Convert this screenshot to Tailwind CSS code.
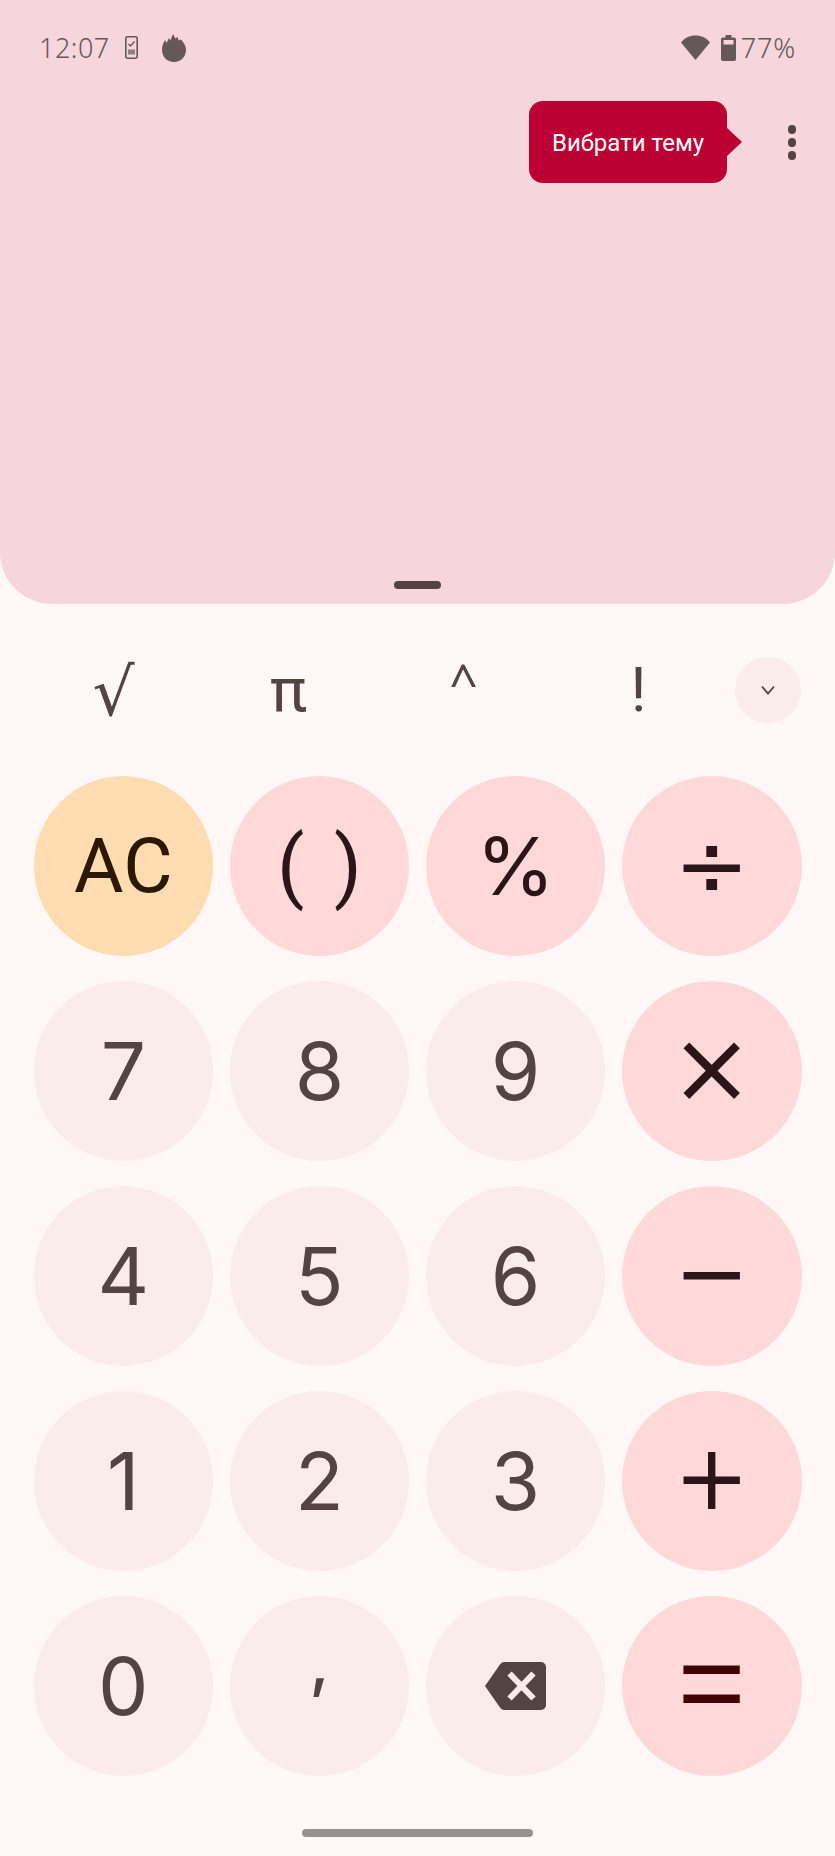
<!DOCTYPE html>
<html lang="uk">
  <head>
    <meta charset="UTF-8" />
    <meta name="viewport" content="width=device-width, initial-scale=1.0" />
    <title>Calculator</title>
    <script src="https://cdn.jsdelivr.net/npm/@tailwindcss/browser@4"></script>
  </head>
  <body class="bg-[#fff8f6] text-[#534341] font-['Inter',sans-serif] w-[835px] h-[1856px] overflow-hidden flex flex-col">

    <!-- display panel -->
    <header class="bg-[#f6d5dc] h-[604px] rounded-b-[52px] flex flex-col shrink-0">
      <div class="flex items-center justify-between pl-[39px] pr-[39px] pt-[31px] h-[64px] text-[#655858]">
        <div class="flex items-center">
          <span class="text-[27px] font-[350] tracking-[0.5px] font-['Noto_Sans',sans-serif] leading-none">12:07</span>
          <svg class="ml-[15px] w-[13px] h-[23px]" viewBox="0 0 13 23">
            <rect x="0.8" y="0.8" width="11.4" height="21.4" rx="1.6" fill="none" stroke="currentColor" stroke-width="1.6" />
            <path d="M3.5 8l2 2 4-4.500" fill="none" stroke="currentColor" stroke-width="1.4" />
            <rect x="3" y="13.500" width="7" height="5" fill="currentColor" opacity="0.7" />
          </svg>
          <svg class="ml-[24px] w-[24px] h-[28px]" viewBox="0 0 26 28" preserveAspectRatio="none">
            <path d="M13 28C5.500 28 0 23 0 15.500 0 11.500 1.500 8.500 3.500 6l1.500 3L7.500 4l1.500 2.500L12 0l2.500 4.500L17 3l1 3.500 2.500-1C23.500 8.500 26 11.500 26 15.500 26 23 20.500 28 13 28z" fill="currentColor" />
          </svg>
        </div>
        <div class="flex items-center">
          <svg class="w-[29px] h-[25px]" viewBox="0 0 29 25">
            <path d="M14.500 25L0 7.500C3.500 3 8.500 0.500 14.500 0.500S25.500 3 29 7.500z" fill="currentColor" />
          </svg>
          <svg class="ml-[11px] w-[15px] h-[26px]" viewBox="0 0 15 26">
            <path fill-rule="evenodd" d="M4.500 0h6v2.500h2.500a2 2 0 0 1 2 2V24a2 2 0 0 1-2 2H2a2 2 0 0 1-2-2V4.500a2 2 0 0 1 2-2h2.500zM2.500 5v4.500h10V5z" fill="currentColor" />
          </svg>
          <span class="ml-[5px] text-[27px] font-[350] tracking-[0.8px] font-['Noto_Sans',sans-serif] leading-none">77%</span>
        </div>
      </div>

      <div class="flex items-center justify-end pt-[37px]">
        <div class="relative bg-[#bd0033] text-white rounded-[14px] w-[198px] h-[82px] pt-[2px] flex items-center justify-center text-[24px] font-['Roboto',sans-serif]">
          Вибрати тему
          <span class="absolute left-[197px] top-[26px] w-[16px] h-[30px] bg-[#bd0033] [clip-path:polygon(0_0,100%_50%,0_100%)]"></span>
        </div>
        <div class="ml-[61px] mr-[39px] flex flex-col gap-[4px]">
          <span class="w-[8px] h-[9px] rounded-full bg-[#534341]"></span>
          <span class="w-[8px] h-[9px] rounded-full bg-[#534341]"></span>
          <span class="w-[8px] h-[9px] rounded-full bg-[#534341]"></span>
        </div>
      </div>

      <div class="mt-auto mb-[15px] mx-auto w-[47px] h-[8px] rounded-full bg-[#534341]"></div>
    </header>

    <!-- scientific row -->
    <section class="flex items-center pl-[26px] pt-[53px] h-[119px] shrink-0 text-[62px] leading-none font-['Roboto',sans-serif]">
      <div class="w-[700px] grid grid-cols-4 items-center text-center">
        <span class="font-['DejaVu_Sans',sans-serif] text-[66px] font-normal pt-[5px]">√</span>
        <span>π</span>
        <span class="font-['Noto_Sans',sans-serif] text-[50px] pb-[18px]">^</span>
        <span>!</span>
      </div>
      <button class="ml-[9px] w-[66px] h-[66px] rounded-full bg-[#fbecec] flex items-center justify-center">
        <svg class="w-[16px] h-[12px]" viewBox="0 0 16 12"><path d="M2 2.500l6 7 6-7" fill="none" stroke="#534341" stroke-width="1.800" /></svg>
      </button>
    </section>

    <!-- keypad -->
    <main class="grid grid-cols-4 gap-x-[16.500px] gap-y-[25px] px-[33.500px] pt-[53px] text-[80px] font-normal leading-none">
      <button class="h-[180px] rounded-full bg-[#ffdcb1] text-[#2a1800] font-['Roboto',sans-serif] text-[76px]">AC</button>
      <button class="h-[180px] rounded-full bg-[#ffd9d9] text-[#2c1516] text-[80px] font-['Roboto',sans-serif] [word-spacing:10px]">( )</button>
      <button class="h-[180px] rounded-full bg-[#ffd9d9] text-[#2c1516]">%</button>
      <button class="h-[180px] rounded-full bg-[#ffd9d9] text-[#2c1516] text-[90px] font-['DejaVu_Sans',sans-serif]">÷</button>

      <button class="h-[180px] rounded-full bg-[#fbecec]">7</button>
      <button class="h-[180px] rounded-full bg-[#fbecec]">8</button>
      <button class="h-[180px] rounded-full bg-[#fbecec]">9</button>
      <button class="h-[180px] rounded-full bg-[#ffd9d9] text-[#2c1516] text-[100px] font-['DejaVu_Sans',sans-serif] pb-[6px]">×</button>

      <button class="h-[180px] rounded-full bg-[#fbecec]">4</button>
      <button class="h-[180px] rounded-full bg-[#fbecec]">5</button>
      <button class="h-[180px] rounded-full bg-[#fbecec]">6</button>
      <button class="h-[180px] rounded-full bg-[#ffd9d9] text-[#2c1516] text-[90px] font-['DejaVu_Sans',sans-serif] pb-[6px]">−</button>

      <button class="h-[180px] rounded-full bg-[#fbecec]">1</button>
      <button class="h-[180px] rounded-full bg-[#fbecec]">2</button>
      <button class="h-[180px] rounded-full bg-[#fbecec]">3</button>
      <button class="h-[180px] rounded-full bg-[#ffd9d9] text-[#2c1516] text-[90px] font-['DejaVu_Sans',sans-serif] pb-[6px]">+</button>

      <button class="h-[180px] rounded-full bg-[#fbecec]">0</button>
      <button class="h-[180px] rounded-full bg-[#fbecec] font-medium text-[66px] pb-[50px]">,</button>
      <button class="h-[180px] rounded-full bg-[#fbecec] flex items-center justify-center">
        <svg class="w-[61px] h-[48px]" viewBox="0 0 61 48">
          <path d="M19 0h37a5 5 0 0 1 5 5v38a5 5 0 0 1-5 5H19a5 5 0 0 1-4-2.500L0 24 15 2.500A5 5 0 0 1 19 0z" fill="#534341" />
          <path d="M24.500 11.500l24 25M48.500 11.500l-24 25" fill="none" stroke="#fbecec" stroke-width="6" />
        </svg>
      </button>
      <button class="h-[180px] rounded-full bg-[#ffd9d9] text-[#410003] text-[116px] font-['Liberation_Sans',sans-serif] pb-[6px]">=</button>
    </main>

    <div class="mt-auto mb-[19px] mx-auto w-[231px] h-[8px] rounded-full bg-[#969290]"></div>
  </body>
</html>
